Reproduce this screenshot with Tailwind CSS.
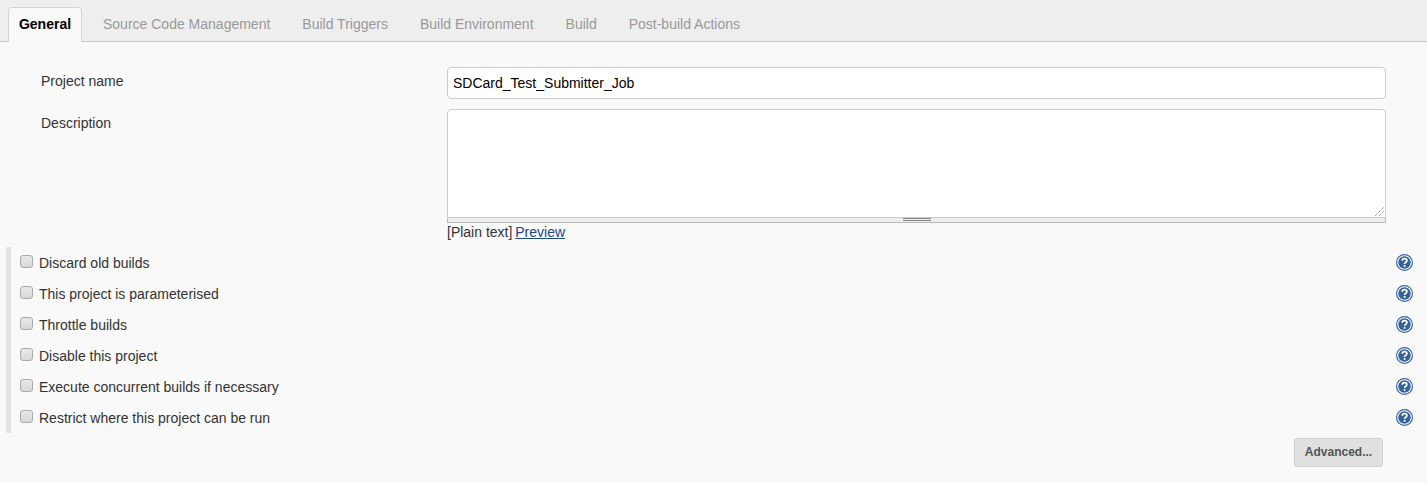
<!DOCTYPE html>
<html>
<head>
<meta charset="utf-8">
<script src="https://cdn.jsdelivr.net/npm/@tailwindcss/browser@4"></script>
</head>
<body class="bg-[#f9f9f9] font-['Liberation_Sans',Arial,sans-serif] text-[14px] text-[#333] overflow-hidden">
<div class="w-[1427px] h-[483px] overflow-hidden">
  <nav class="h-[42px] bg-[#eeeeee] border-b border-[#c8c8c8] pl-[8px] pt-[7px] flex items-start text-[14px] text-[#999]">
    <div class="h-[35px] w-[74px] pb-[2px] bg-[#f9f9f9] border border-b-0 border-[#d4d4d4] rounded-t-[4px] flex items-center justify-center font-bold text-black">General</div>
    <div class="h-[34px] flex items-center pl-[21px]">Source Code Management</div>
    <div class="h-[34px] flex items-center pl-[32px]">Build Triggers</div>
    <div class="h-[34px] flex items-center pl-[32px]">Build Environment</div>
    <div class="h-[34px] flex items-center pl-[32px]">Build</div>
    <div class="h-[34px] flex items-center pl-[32px]">Post-build Actions</div>
  </nav>

  <div class="flex pt-[25px]">
    <div class="w-[447px] pl-[41px] pt-[6px] leading-[16px]">Project name</div>
    <div class="w-[939px] h-[32px] bg-white border border-[#cccccc] rounded-[4px] flex items-center pl-[5px] text-[14px] text-black">SDCard_Test_Submitter_Job</div>
  </div>

  <div class="flex pt-[10px]">
    <div class="w-[447px] pl-[41px] pt-[6px] leading-[16px]">Description</div>
    <div class="w-[939px]">
      <div class="relative h-[109px] bg-white border border-[#cccccc] rounded-t-[4px]">
        <svg class="absolute right-0 bottom-0" width="11" height="11" viewBox="0 0 11 11" fill="none" stroke="#777" stroke-width="1" stroke-dasharray="1 1"><path d="M1 10 10 1M5 10 10 5"/></svg>
      </div>
      <div class="h-[5px] bg-[#eeeeee] border-x border-b border-[#bbbbbb] flex flex-col items-center justify-start">
        <div class="w-[28px] h-[3px] border-y border-[#888888]"></div>
      </div>
      <div class="leading-[18px] text-[14px]">[Plain text] <a href="#" class="-ml-px text-[#204a87] underline">Preview</a></div>
    </div>
  </div>

  <div class="mt-[6px] ml-[6px] mr-[14px] border-l-[5px] border-[#e4e4e4] h-[186px] pl-[9px] pt-[1px]">
    <div class="h-[31px] flex items-center">
      <span class="w-[13px] h-[13px] mt-[-4px] rounded-[3px] border border-[#aaaaaa] bg-linear-to-b from-[#e8e8e8] to-[#d8d8d8]"></span>
      <span class="ml-[6px] flex-1">Discard old builds</span>
      <svg class="mt-[-3px]" width="17" height="17" viewBox="0 0 17 17"><circle cx="8.5" cy="8.5" r="7.9" fill="#fff" stroke="#3a64a0" stroke-width="1.2"/><circle cx="8.5" cy="8.5" r="6.2" fill="#33629f"/><path d="M6.2 6.8c0-1.4 1-2.2 2.3-2.2s2.4.8 2.4 2c0 1.7-2.3 1.7-2.3 3.5" fill="none" stroke="#fff" stroke-width="1.7"/><rect x="7.7" y="11" width="1.8" height="1.8" fill="#fff"/></svg>
    </div>
    <div class="h-[31px] flex items-center">
      <span class="w-[13px] h-[13px] mt-[-4px] rounded-[3px] border border-[#aaaaaa] bg-linear-to-b from-[#e8e8e8] to-[#d8d8d8]"></span>
      <span class="ml-[6px] flex-1">This project is parameterised</span>
      <svg class="mt-[-3px]" width="17" height="17" viewBox="0 0 17 17"><circle cx="8.5" cy="8.5" r="7.9" fill="#fff" stroke="#3a64a0" stroke-width="1.2"/><circle cx="8.5" cy="8.5" r="6.2" fill="#33629f"/><path d="M6.2 6.8c0-1.4 1-2.2 2.3-2.2s2.4.8 2.4 2c0 1.7-2.3 1.7-2.3 3.5" fill="none" stroke="#fff" stroke-width="1.7"/><rect x="7.7" y="11" width="1.8" height="1.8" fill="#fff"/></svg>
    </div>
    <div class="h-[31px] flex items-center">
      <span class="w-[13px] h-[13px] mt-[-4px] rounded-[3px] border border-[#aaaaaa] bg-linear-to-b from-[#e8e8e8] to-[#d8d8d8]"></span>
      <span class="ml-[6px] flex-1">Throttle builds</span>
      <svg class="mt-[-3px]" width="17" height="17" viewBox="0 0 17 17"><circle cx="8.5" cy="8.5" r="7.9" fill="#fff" stroke="#3a64a0" stroke-width="1.2"/><circle cx="8.5" cy="8.5" r="6.2" fill="#33629f"/><path d="M6.2 6.8c0-1.4 1-2.2 2.3-2.2s2.4.8 2.4 2c0 1.7-2.3 1.7-2.3 3.5" fill="none" stroke="#fff" stroke-width="1.7"/><rect x="7.7" y="11" width="1.8" height="1.8" fill="#fff"/></svg>
    </div>
    <div class="h-[31px] flex items-center">
      <span class="w-[13px] h-[13px] mt-[-4px] rounded-[3px] border border-[#aaaaaa] bg-linear-to-b from-[#e8e8e8] to-[#d8d8d8]"></span>
      <span class="ml-[6px] flex-1">Disable this project</span>
      <svg class="mt-[-3px]" width="17" height="17" viewBox="0 0 17 17"><circle cx="8.5" cy="8.5" r="7.9" fill="#fff" stroke="#3a64a0" stroke-width="1.2"/><circle cx="8.5" cy="8.5" r="6.2" fill="#33629f"/><path d="M6.2 6.8c0-1.4 1-2.2 2.3-2.2s2.4.8 2.4 2c0 1.7-2.3 1.7-2.3 3.5" fill="none" stroke="#fff" stroke-width="1.7"/><rect x="7.7" y="11" width="1.8" height="1.8" fill="#fff"/></svg>
    </div>
    <div class="h-[31px] flex items-center">
      <span class="w-[13px] h-[13px] mt-[-4px] rounded-[3px] border border-[#aaaaaa] bg-linear-to-b from-[#e8e8e8] to-[#d8d8d8]"></span>
      <span class="ml-[6px] flex-1">Execute concurrent builds if necessary</span>
      <svg class="mt-[-3px]" width="17" height="17" viewBox="0 0 17 17"><circle cx="8.5" cy="8.5" r="7.9" fill="#fff" stroke="#3a64a0" stroke-width="1.2"/><circle cx="8.5" cy="8.5" r="6.2" fill="#33629f"/><path d="M6.2 6.8c0-1.4 1-2.2 2.3-2.2s2.4.8 2.4 2c0 1.7-2.3 1.7-2.3 3.5" fill="none" stroke="#fff" stroke-width="1.7"/><rect x="7.7" y="11" width="1.8" height="1.8" fill="#fff"/></svg>
    </div>
    <div class="h-[31px] flex items-center">
      <span class="w-[13px] h-[13px] mt-[-4px] rounded-[3px] border border-[#aaaaaa] bg-linear-to-b from-[#e8e8e8] to-[#d8d8d8]"></span>
      <span class="ml-[6px] flex-1">Restrict where this project can be run</span>
      <svg class="mt-[-3px]" width="17" height="17" viewBox="0 0 17 17"><circle cx="8.5" cy="8.5" r="7.9" fill="#fff" stroke="#3a64a0" stroke-width="1.2"/><circle cx="8.5" cy="8.5" r="6.2" fill="#33629f"/><path d="M6.2 6.8c0-1.4 1-2.2 2.3-2.2s2.4.8 2.4 2c0 1.7-2.3 1.7-2.3 3.5" fill="none" stroke="#fff" stroke-width="1.7"/><rect x="7.7" y="11" width="1.8" height="1.8" fill="#fff"/></svg>
    </div>
  </div>

  <div class="flex justify-end pr-[44px] pt-[5px]">
    <button class="w-[89px] h-[29px] pb-[2px] bg-[#e0e0e0] border border-[#cfcfcf] rounded-[3px] text-[12px] font-bold text-[#555]">Advanced...</button>
  </div>
</div>
</body>
</html>
